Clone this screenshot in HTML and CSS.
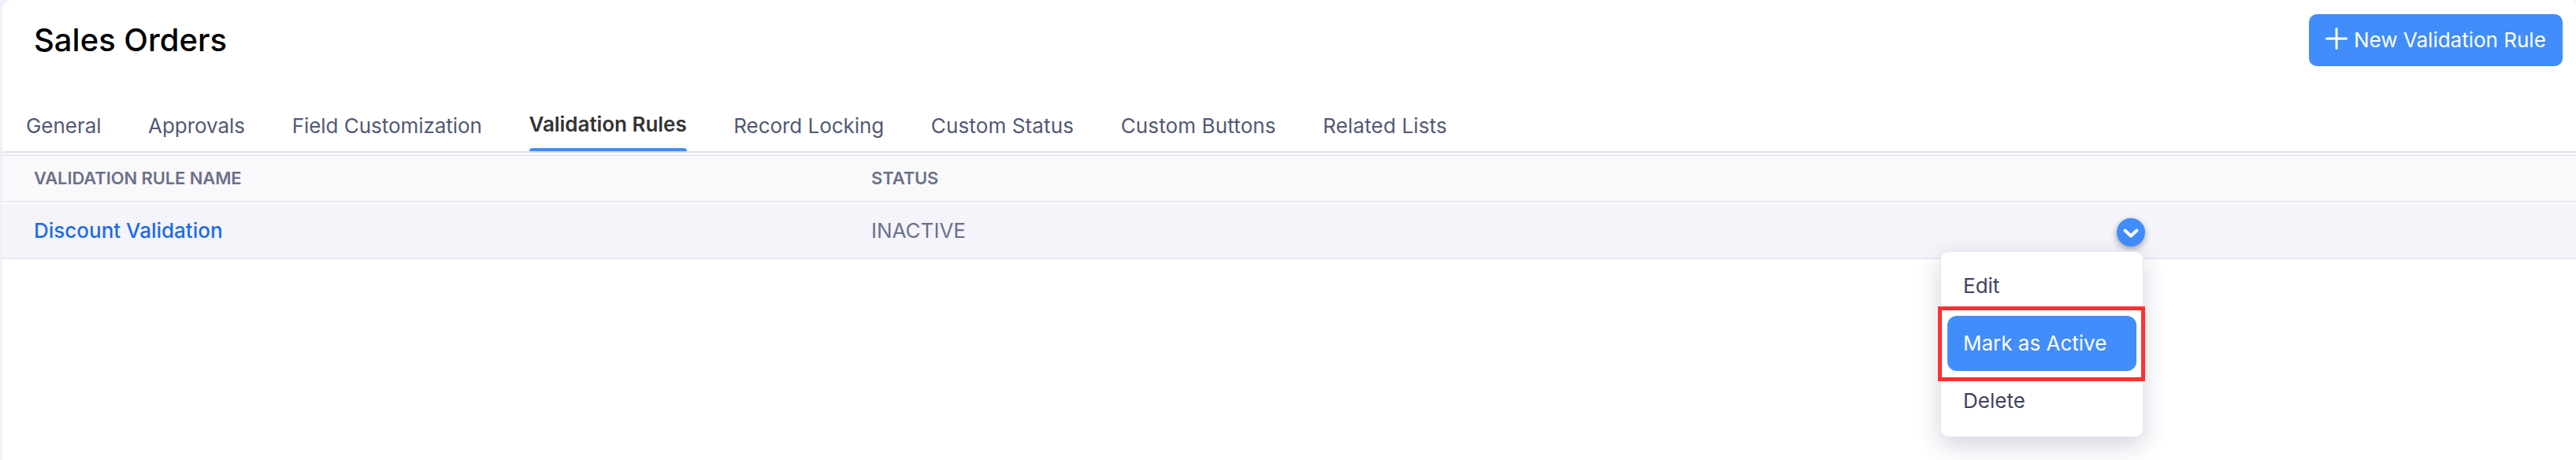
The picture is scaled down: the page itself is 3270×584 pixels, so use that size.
FILE: index.html
```html
<!DOCTYPE html>
<html lang="en">
<head>
  <meta charset="UTF-8" />
  <meta name="viewport" content="width=device-width, initial-scale=1.0"/>
  <title>Sales Orders - Validation Rules</title>
  <link rel="stylesheet" href="styles.css">
</head>
<body>
  <main class="panel">
    <header class="page-header">
      <h1>Sales Orders</h1>
      <button class="new-btn">
        <svg class="plus-icon" viewBox="0 0 28 28"><path d="M14 1.5v25M1.5 14h25"/></svg>
        <span>New Validation Rule</span>
      </button>
    </header>

    <nav class="tabs">
      <a class="tab">General</a>
      <a class="tab">Approvals</a>
      <a class="tab">Field Customization</a>
      <a class="tab active">Validation Rules</a>
      <a class="tab">Record Locking</a>
      <a class="tab wide">Custom Status</a>
      <a class="tab wide">Custom Buttons</a>
      <a class="tab wide">Related Lists</a>
    </nav>

    <div class="table">
      <div class="row head-row">
        <div>VALIDATION RULE NAME</div>
        <div>STATUS</div>
      </div>
      <div class="row rule-row">
        <a class="rule-name">Discount Validation</a>
        <div class="rule-status">INACTIVE</div>
        <div class="actions">
          <button class="toggle-btn">
            <svg viewBox="0 0 36 36"><path d="M10.5 15.5l7.5 7 7.5-7"/></svg>
          </button>
          <!-- Dropdown menu -->
          <div class="menu">
            <a class="menu-item">Edit</a>
            <a class="menu-item selected">Mark as Active</a>
            <a class="menu-item">Delete</a>
            <div class="highlight"></div>
          </div>
        </div>
      </div>
    </div>
  </main>
</body>
</html>
```
FILE: styles.css
```css
* {
  margin: 0;
  padding: 0;
  box-sizing: border-box;
}

body {
  background-color: #f0effa;
  font-family: Inter, sans-serif;
  font-size: 26px;
  height: 584px;
  overflow: hidden;
  padding-left: 3px;
}

.panel {
  background-color: #fff;
  height: 584px;
  border-radius: 12px 8px 0 0;
}

.page-header {
  display: flex;
  justify-content: space-between;
  align-items: flex-start;
  height: 128px;
  padding: 18px 17px 0 40px;
}

h1 {
  font-size: 40px;
  font-weight: 500;
  line-height: 66px;
  color: #000;
}

.new-btn {
  display: flex;
  align-items: center;
  width: 322px;
  height: 66px;
  padding-left: 21px;
  padding-bottom: 2px;
  gap: 8px;
  border: none;
  border-radius: 10px;
  background-color: #408dfb;
  color: #fff;
  font-family: inherit;
  font-size: 26px;
  white-space: nowrap;
}

.plus-icon {
  width: 28px;
  height: 28px;
  margin-bottom: 2px;
  flex-shrink: 0;
}

.plus-icon path {
  fill: none;
  stroke: #fff;
  stroke-width: 3;
  stroke-linecap: round;
}

.tabs {
  display: flex;
  gap: 59.6px;
  height: 66px;
  padding-left: 30px;
  border-bottom: 2px solid #dfe1ea;
}

.tab {
  height: 64px;
  line-height: 64px;
  letter-spacing: -0.04px;
  color: #525975;
  white-space: nowrap;
}

.tab.wide {
  letter-spacing: 0.13px;
}

.tab.active {
  position: relative;
  line-height: 60px;
  font-weight: 600;
  color: #333;
}

.tab.active::after {
  content: "";
  position: absolute;
  left: 0;
  bottom: 0;
  width: 100%;
  height: 4px;
  border-radius: 4px 4px 0 0;
  background-color: #408dfb;
}

.table {
  margin-top: 2px;
}

.row {
  display: grid;
  grid-template-columns: 1063px 1581px 1fr;
  align-items: center;
  padding-left: 40px;
  padding-bottom: 2px;
  border-bottom: 2px solid #e9e9f2;
}

.head-row {
  height: 61px;
  border-top: 2px solid #e9e9f2;
  background-color: #f9f9fb;
  color: #6c718a;
  font-size: 22px;
  font-weight: 600;
  letter-spacing: -0.12px;
}

.rule-row {
  height: 70px;
  margin-top: 2px;
  background-color: #f5f4fa;
}

.rule-name {
  color: #1b6ce8;
  font-weight: 500;
}

.rule-status {
  color: #6c718a;
}

.actions {
  position: relative;
  width: 36px;
  height: 36px;
  margin-top: 5px;
}

.toggle-btn {
  display: block;
  width: 36px;
  height: 36px;
  border: none;
  border-radius: 50%;
  background-color: #408dfb;
  box-shadow: 0 3px 8px rgba(0, 0, 0, 0.35);
}

.toggle-btn path {
  fill: none;
  stroke: #fff;
  stroke-width: 4;
  stroke-linecap: round;
  stroke-linejoin: round;
}

.menu {
  position: absolute;
  top: 42px;
  right: 2px;
  width: 258px;
  height: 236px;
  padding: 8px;
  border: 1px solid #e9e9f2;
  border-radius: 10px;
  background-color: #fff;
  box-shadow: 0 10px 30px rgba(60, 50, 110, 0.22);
}

.menu-item {
  display: block;
  height: 70px;
  margin-bottom: 3px;
  padding-left: 20px;
  border-radius: 12px;
  line-height: 70px;
  color: #40445c;
  white-space: nowrap;
}

.menu-item.selected {
  background-color: #408dfb;
  color: #fff;
}

/* red frame around the selected item */
.highlight {
  position: absolute;
  top: 69px;
  left: -4px;
  width: 263px;
  height: 95px;
  border: 5px solid #ff3131;
}
```
